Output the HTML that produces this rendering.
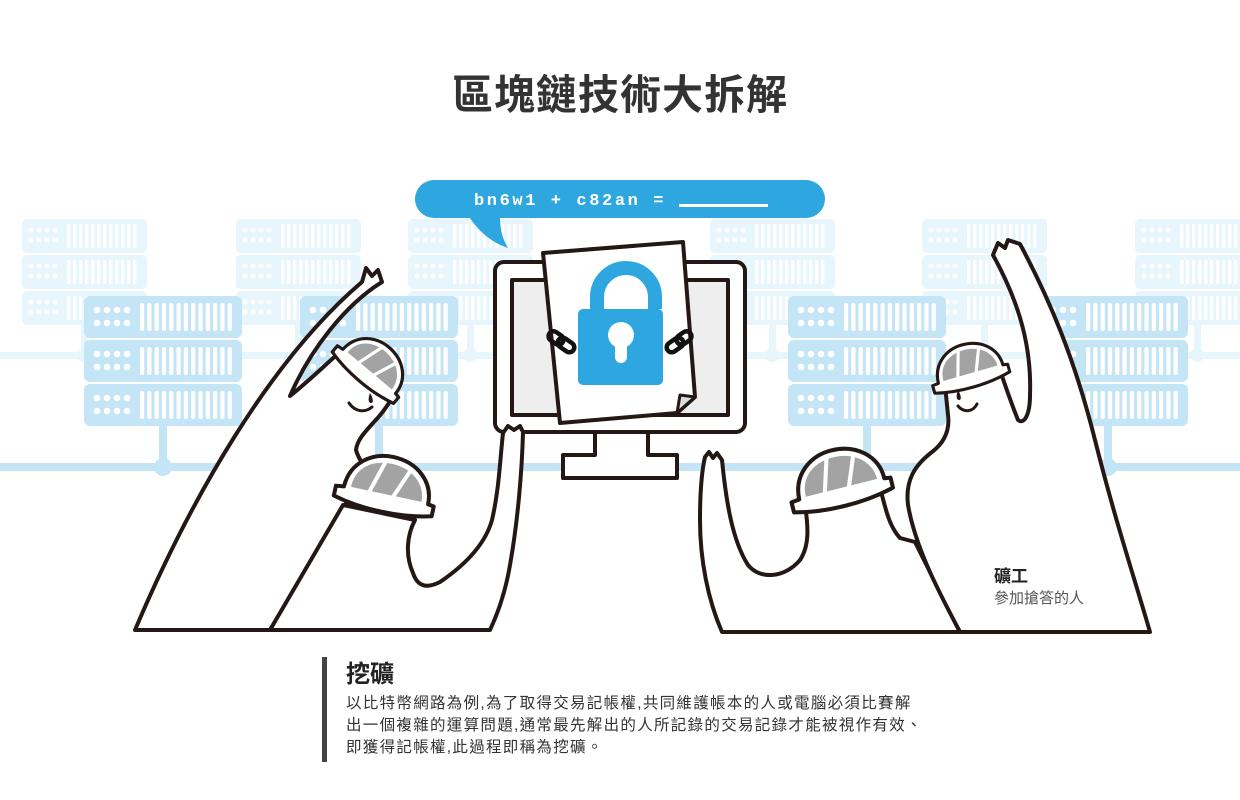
<!DOCTYPE html>
<html><head><meta charset="utf-8">
<style>
html,body{margin:0;padding:0;background:#fff;}
body{width:1240px;height:800px;overflow:hidden;position:relative;font-family:"Liberation Sans","Noto Sans CJK TC",sans-serif;}
svg{position:absolute;left:0;top:0;}
.t{position:absolute;white-space:nowrap;}
</style></head><body>
<svg width="1240" height="800" viewBox="0 0 1240 800">
<defs>
<g id="lu">
 <rect x="0" y="0" width="125" height="34" rx="5" fill="#e7f5fc"/>
 <g fill="#fff">
  <circle cx="9" cy="11" r="2.6"/><circle cx="17" cy="11" r="2.6"/><circle cx="25" cy="11" r="2.6"/><circle cx="33" cy="11" r="2.6"/>
  <circle cx="9" cy="21" r="2.6"/><circle cx="17" cy="21" r="2.6"/><circle cx="25" cy="21" r="2.6"/><circle cx="33" cy="21" r="2.6"/>
  <rect x="45" y="5" width="3.4" height="24" rx="1.5"/><rect x="51" y="5" width="3.4" height="24" rx="1.5"/><rect x="57" y="5" width="3.4" height="24" rx="1.5"/><rect x="63" y="5" width="3.4" height="24" rx="1.5"/><rect x="69" y="5" width="3.4" height="24" rx="1.5"/><rect x="75" y="5" width="3.4" height="24" rx="1.5"/><rect x="81" y="5" width="3.4" height="24" rx="1.5"/><rect x="87" y="5" width="3.4" height="24" rx="1.5"/><rect x="93" y="5" width="3.4" height="24" rx="1.5"/><rect x="99" y="5" width="3.4" height="24" rx="1.5"/><rect x="105" y="5" width="3.4" height="24" rx="1.5"/><rect x="111" y="5" width="3.4" height="24" rx="1.5"/>
 </g>
</g>
<g id="lr"><use href="#lu" y="0"/><use href="#lu" y="36"/><use href="#lu" y="72"/></g>
<g id="du">
 <rect x="0" y="0" width="158" height="42" rx="6" fill="#c4e5f6"/>
 <g fill="#fff">
  <circle cx="13" cy="14" r="3.3"/><circle cx="23" cy="14" r="3.3"/><circle cx="33" cy="14" r="3.3"/><circle cx="43" cy="14" r="3.3"/>
  <circle cx="13" cy="27" r="3.3"/><circle cx="23" cy="27" r="3.3"/><circle cx="33" cy="27" r="3.3"/><circle cx="43" cy="27" r="3.3"/>
  <rect x="56" y="7" width="4.2" height="28" rx="2"/><rect x="63.3" y="7" width="4.2" height="28" rx="2"/><rect x="70.6" y="7" width="4.2" height="28" rx="2"/><rect x="77.9" y="7" width="4.2" height="28" rx="2"/><rect x="85.2" y="7" width="4.2" height="28" rx="2"/><rect x="92.5" y="7" width="4.2" height="28" rx="2"/><rect x="99.8" y="7" width="4.2" height="28" rx="2"/><rect x="107.1" y="7" width="4.2" height="28" rx="2"/><rect x="114.4" y="7" width="4.2" height="28" rx="2"/><rect x="121.7" y="7" width="4.2" height="28" rx="2"/><rect x="129" y="7" width="4.2" height="28" rx="2"/><rect x="136.3" y="7" width="4.2" height="28" rx="2"/><rect x="143.6" y="7" width="4.2" height="28" rx="2"/>
 </g>
</g>
<g id="dr"><use href="#du" y="0"/><use href="#du" y="44"/><use href="#du" y="88"/></g>
<clipPath id="hc"><path d="M-40,-3 C-40,-30 -20,-42 0,-42 C25,-42 42,-25 42,-3 Z"/></clipPath>
<g id="hel">
 <path d="M-50,-4 L-42,-5 C-41,-31 -20,-44 0,-44 C26,-44 44,-27 44,-5 L50,-4 L50,6 C20,14 -20,14 -50,6 Z" fill="#fff" stroke="#231815" stroke-width="4" stroke-linejoin="round"/>
 <g clip-path="url(#hc)">
  <path d="M-35,-6 C-35,-27 -18,-37 0,-37 C22,-37 37,-23 37,-6 Z" fill="#a3a3a3"/>
  <line x1="-17" y1="-2" x2="-5" y2="-42" stroke="#fff" stroke-width="4"/>
  <line x1="7" y1="-2" x2="23" y2="-42" stroke="#fff" stroke-width="4"/>
 </g>
</g>
</defs>

<rect x="0" y="352" width="1240" height="7" fill="#e7f5fc"/>
<g fill="#e7f5fc">
 <rect x="81" y="320" width="7" height="36"/><circle cx="84" cy="355" r="7"/>
 <rect x="295" y="320" width="7" height="36"/><circle cx="298" cy="355" r="7"/>
 <rect x="467" y="320" width="7" height="36"/><circle cx="470" cy="355" r="7"/>
 <rect x="769" y="320" width="7" height="36"/><circle cx="772" cy="355" r="7"/>
 <rect x="981" y="320" width="7" height="36"/><circle cx="984" cy="355" r="7"/>
 <rect x="1194" y="320" width="7" height="36"/><circle cx="1197" cy="355" r="7"/>
</g>
<use href="#lr" x="22" y="219"/>
<use href="#lr" x="236" y="219"/>
<use href="#lr" x="408" y="219"/>
<use href="#lr" x="710" y="219"/>
<use href="#lr" x="922" y="219"/>
<use href="#lr" x="1135" y="219"/>

<rect x="0" y="463" width="1240" height="8" fill="#c4e5f6"/>
<g fill="#c4e5f6">
 <rect x="159" y="420" width="8" height="46"/><circle cx="163" cy="467" r="9"/>
 <rect x="375" y="420" width="8" height="46"/><circle cx="379" cy="467" r="9"/>
 <rect x="863" y="420" width="8" height="46"/><circle cx="867" cy="467" r="9"/>
 <rect x="1104" y="420" width="8" height="46"/><circle cx="1108" cy="467" r="9"/>
</g>
<use href="#dr" x="84" y="296"/>
<use href="#dr" x="300" y="296"/>
<use href="#dr" x="788" y="296"/>
<use href="#dr" x="1030" y="296"/>

<path d="M434,180 H806 A19,19 0 0 1 806,218 H500 C500,230 503,240 508,248 C490,242 478,230 470,218 H434 A19,19 0 0 1 434,180 Z" fill="#2ea7e0"/>
<text x="474" y="205" font-family="Liberation Mono, monospace" font-weight="bold" font-size="17" letter-spacing="2.6" fill="#fff">bn6w1 + c82an =</text>
<rect x="679" y="204" width="89" height="3" fill="#fff"/>

<g stroke="#231815" stroke-width="4" stroke-linejoin="round">
 <path d="M595,432 V455 H563 V478 H677 V455 H648 V432 Z" fill="#fff"/>
 <rect x="495" y="262" width="250" height="170" rx="9" fill="#fff"/>
 <rect x="512" y="280" width="216" height="135" fill="#eeeeee"/>
 <polygon points="543,253 683,242 695,397 677,413 560,423" fill="#fff"/>
 <polygon points="677,413 680,395 695,397" fill="#dcdcdc" stroke-width="3"/>
</g>
<path d="M597,309 V297 A29,29 0 0 1 655,297 V309" fill="none" stroke="#2ea7e0" stroke-width="14"/>
<rect x="578" y="309" width="85" height="76" rx="5" fill="#2ea7e0"/>
<circle cx="621" cy="335" r="13" fill="#fff"/>
<rect x="615" y="335" width="12" height="28" rx="6" fill="#fff"/>
<g fill="none" stroke="#111" stroke-width="4.5">
 <rect x="548" y="333" width="16" height="10" rx="5" transform="rotate(35 556 338)"/>
 <rect x="557" y="340" width="18" height="10" rx="5" transform="rotate(35 566 345)"/>
 <rect x="666" y="340" width="18" height="10" rx="5" transform="rotate(-35 675 345)"/>
 <rect x="676" y="333" width="16" height="10" rx="5" transform="rotate(-35 684 338)"/>
</g>

<g stroke="#231815" stroke-width="4" stroke-linejoin="round" stroke-linecap="round" fill="#fff">
<path d="M135,630 C190,500 270,360 362,282 L366,268 L372,276 L378,270 L382,282 C345,305 310,350 290,396 C310,380 325,365 340,352 L392,398 C385,410 378,418 373,423 C365,432 357,440 356,450 C358,458 362,462 366,470 L270,630 Z"/>
<path d="M270,630 L343,505 L415,520 C407,535 405,555 413,573 C418,588 428,588 440,582 C465,565 485,545 492,520 C499,490 500,460 503,433 L508,426 L514,430 L520,426 L523,432 C522,470 518,520 510,565 C505,595 497,615 490,630 Z"/>
<path d="M722,632 C708,600 700,560 700,520 C700,490 702,470 705,457 L709,452 L713,458 L717,453 L722,460 C726,500 732,540 748,565 C760,580 785,578 800,560 C810,545 808,525 805,505 L880,488 C885,505 888,525 900,538 L915,542 L960,632 Z"/>
<path d="M960,632 C935,585 915,545 908,505 C905,480 915,465 932,452 C945,442 950,430 948,415 L945,385 L1000,370 C1005,385 1012,405 1018,420 C1024,425 1030,415 1030,395 C1032,340 1015,295 993,255 L998,243 L1005,248 L1008,240 L1020,244 C1050,300 1075,360 1095,440 C1115,520 1135,580 1150,632 Z"/>
</g>
<path d="M370,393 C368,398 368,403 371,403 C374,403 373,398 370,393 Z" fill="#231815"/>
<path d="M349,403 C355,412 365,413 372,407" fill="none" stroke="#231815" stroke-width="3" stroke-linecap="round"/>
<path d="M958,390 C956,395 956,400 959,400 C962,400 961,395 958,390 Z" fill="#231815"/>
<path d="M958,406 C964,413 973,412 977,404" fill="none" stroke="#231815" stroke-width="3" stroke-linecap="round"/>

<use href="#hel" transform="translate(366,374) rotate(40) scale(0.8)"/>
<use href="#hel" transform="translate(384,500) rotate(12) scale(1.0)"/>
<use href="#hel" transform="translate(971,378) rotate(-16) scale(0.78)"/>
<use href="#hel" transform="translate(842,494) rotate(-14) scale(1.02)"/>

<rect x="322" y="657" width="5" height="105" fill="#444"/>
</svg>

<div class="t" style="left:0;width:1240px;text-align:center;top:61px;font-size:41px;font-weight:bold;color:#333;letter-spacing:1px;">區塊鏈技術大拆解</div>
<div class="t" style="left:994px;top:562px;font-size:17px;font-weight:bold;color:#222;">礦工</div>
<div class="t" style="left:994px;top:587px;font-size:15px;color:#555;">參加搶答的人</div>
<div class="t" style="left:346px;top:654px;font-size:24px;font-weight:bold;color:#222;">挖礦</div>
<div class="t" style="left:346px;top:693px;font-size:15.5px;line-height:22px;color:#333;letter-spacing:1.3px;">以比特幣網路為例,為了取得交易記帳權,共同維護帳本的人或電腦必須比賽解<br>出一個複雜的運算問題,通常最先解出的人所記錄的交易記錄才能被視作有效、<br>即獲得記帳權,此過程即稱為挖礦。</div>
</body></html>
